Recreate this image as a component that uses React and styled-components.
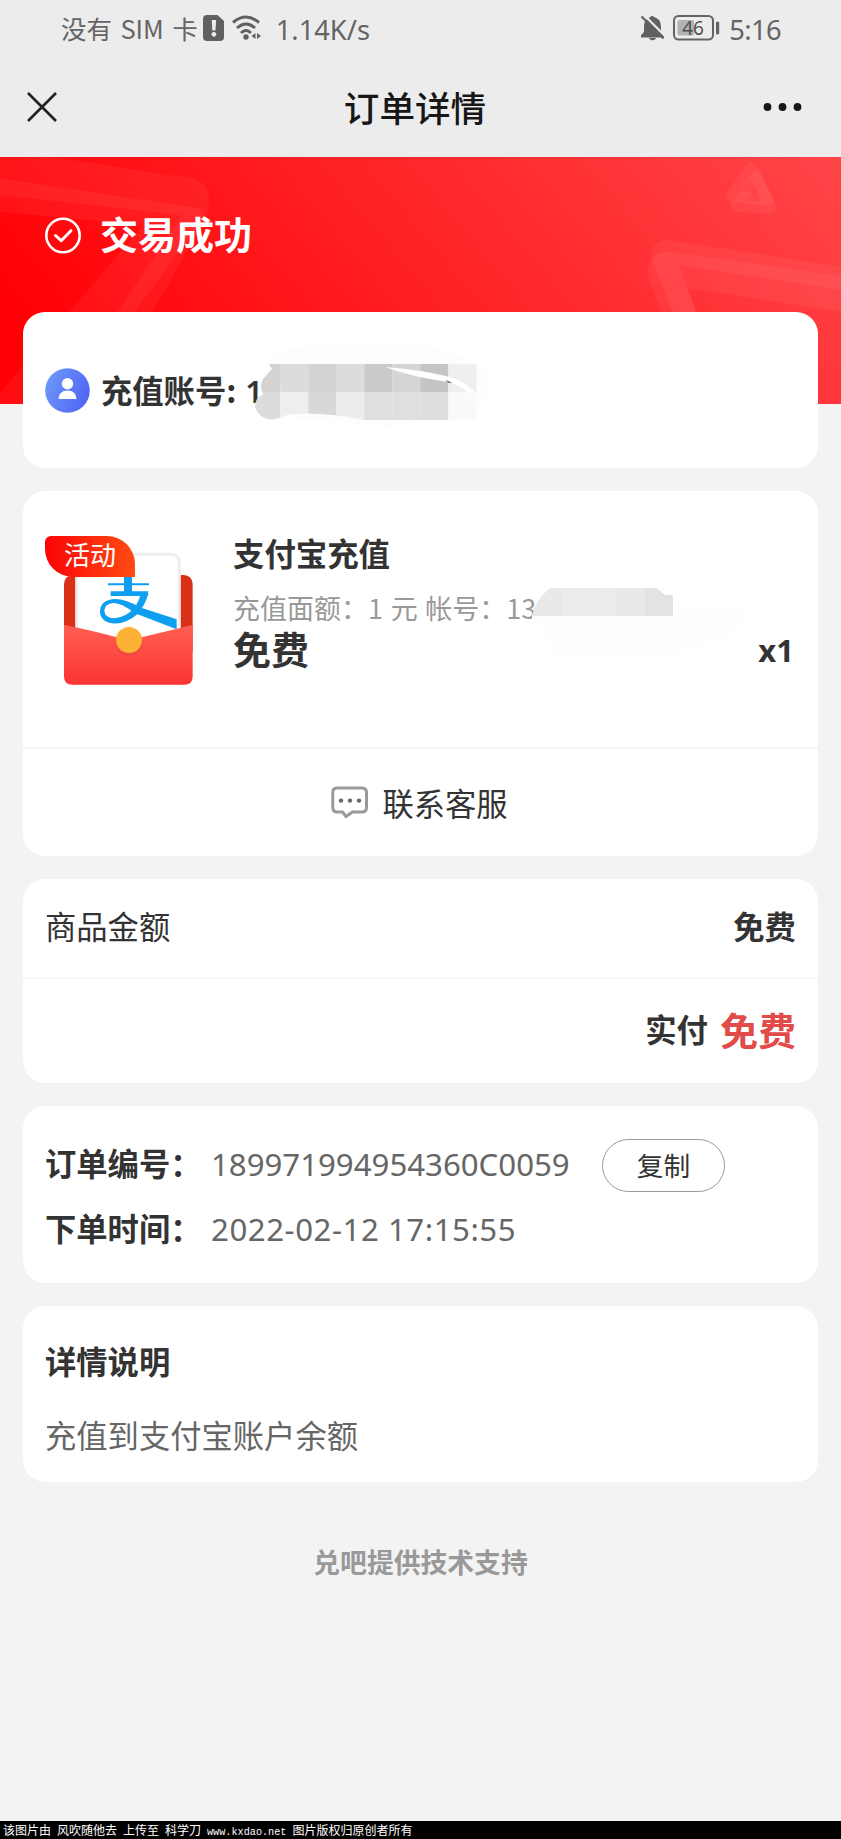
import React from "react";
import styled, { createGlobalStyle } from "styled-components";

const Global = createGlobalStyle`
  * { box-sizing: border-box; }
  html, body { margin: 0; padding: 0; }
  body {
    background: #f3f3f3;
    color: #333;
    font-family: "Noto Sans CJK SC", "Noto Sans", sans-serif;
    font-size: 31.3px;
    line-height: 40px;
    white-space: nowrap;
  }
`;

const Page = styled.div`
  width: 841px;
  height: 1839px;
  display: flex;
  flex-direction: column;
  overflow: hidden;
`;

const StatusBar = styled.div`
  height: 56px;
  padding: 0 60px 0 61px;
  background: #ececec;
  display: flex;
  align-items: center;
  color: #646464;
  font-size: 25.5px;
`;

const StatusText = styled.span`
  font-size: 25.5px;
  word-spacing: 2.7px;
  line-height: 54px;
  height: 54px;
`;

const StatusFigure = styled.span`
  font-family: "Noto Sans", sans-serif;
  font-size: 27.3px;
  line-height: 54px;
  height: 51px;
  margin-left: ${(p) => p.$left}px;
  letter-spacing: ${(p) => p.$track || 0}px;
`;

const StatusIcon = styled.svg`
  display: block;
  flex: none;
  overflow: visible;
  margin-left: ${(p) => p.$left || 0}px;
`;

const Spacer = styled.div`
  flex: 1;
`;

const NavBar = styled.div`
  height: 101px;
  background: #ececec;
  display: grid;
  grid-template-columns: 100px 1fr 100px;
  align-items: center;
  padding: 0 36px 0 25px;
`;

const NavTitle = styled.h1`
  margin: 0;
  font-size: 35.6px;
  font-weight: 500;
  line-height: 50px;
  text-align: center;
  color: #171717;
`;

const NavIcon = styled.svg`
  display: block;
  justify-self: ${(p) => p.$side};
`;

const Banner = styled.section`
  position: relative;
  height: 247px;
  flex: none;
  background: linear-gradient(50deg, #ff0004 8%, #ff2226 52%, #ff4548 100%);
`;

const BannerArt = styled.svg`
  position: absolute;
  inset: 0;
`;

const BannerStatus = styled.div`
  position: relative;
  display: flex;
  align-items: center;
  gap: 18px;
  height: 155px;
  padding-left: 44px;
  color: #fff;
  font-size: 38px;
  font-weight: 700;
`;

const BannerText = styled.span`
  line-height: 56px;
  margin-top: -3px;
`;

const Cards = styled.main`
  position: relative;
  margin: -92px 23px 0;
  display: flex;
  flex-direction: column;
  gap: 23px;
`;

const Card = styled.section`
  background: #fff;
  border-radius: 22px;
  height: ${(p) => p.$height}px;
  flex: none;
  position: relative;
`;

const AccountCard = styled(Card)`
  display: flex;
  align-items: center;
  padding: 0 22px;
`;

const AccountText = styled.span`
  margin-left: 11px;
  font-weight: 700;
`;

const AccountDigits = styled.span`
  font-family: "Noto Sans", sans-serif;
  font-size: 31px;
  font-weight: 600;
  margin: 2px 0 0 9px;
`;

const Mask = styled.svg`
  position: absolute;
  left: ${(p) => p.$x}px;
  top: ${(p) => p.$y}px;
`;

const Product = styled.div`
  height: 258px;
  border-bottom: 2px solid #f5f5f5;
  display: flex;
  padding: 44px 24px 0 22px;
`;

const Thumb = styled.div`
  position: relative;
  width: 150px;
  height: 150px;
  margin-right: 38px;
`;

const Tag = styled.span`
  position: absolute;
  left: 0;
  top: 1px;
  width: 90px;
  height: 41px;
  border-radius: 6px 28px 0 28px;
  background: linear-gradient(90deg, #fb0505, #ff4b14);
  color: #fff;
  font-size: 26px;
  line-height: 36px;
  text-align: center;
`;

const ProductInfo = styled.div`
  flex: 1;
  display: flex;
  flex-direction: column;
`;

const ProductName = styled.h2`
  margin: 0;
  font-size: 31.4px;
  font-weight: 700;
  line-height: 36px;
`;

const ProductSpec = styled.p`
  margin: 18px 0 0;
  font-size: 27px;
  line-height: 38px;
  word-spacing: 1.6px;
  color: #999;
`;

const PriceRow = styled.div`
  display: flex;
  justify-content: space-between;
  align-items: center;
  height: 42px;
  font-weight: 700;
`;

const Price = styled.span`
  font-size: ${(p) => (p.$large ? 38 : 31.4)}px;
  font-weight: 700;
  color: ${(p) => (p.$accent ? "#e24b49" : "#333")};
`;

const Quantity = styled.span`
  font-family: "Noto Sans", sans-serif;
  font-size: 31px;
  font-weight: 700;
  margin-top: 3px;
`;

const ContactRow = styled.div`
  height: 107px;
  padding-right: 2px;
  display: flex;
  align-items: center;
  justify-content: center;
  gap: 14px;
`;

const AmountRow = styled.div`
  height: ${(p) => p.$height}px;
  padding: 0 22px 4px;
  display: flex;
  align-items: center;
  justify-content: ${(p) => (p.$end ? "flex-end" : "space-between")};
  gap: 12px;
  border-bottom: ${(p) => (p.$end ? "none" : "2px solid #f7f7f7")};
`;

const OrderCard = styled(Card)`
  padding: 24px 22px 0;
`;

const OrderRow = styled.div`
  display: flex;
  align-items: center;
  height: 65px;
`;

const Label = styled.span`
  width: 166px;
  font-weight: 700;
`;

const Value = styled.span`
  font-family: "Noto Sans", sans-serif;
  font-size: 31.2px;
  margin-top: 2px;
  color: #666;
  letter-spacing: ${(p) => p.$track}px;
`;

const CopyButton = styled.button`
  margin: 5px 0 0 auto;
  width: 123px;
  height: 53px;
  border: 1px solid #999;
  border-radius: 27px;
  background: #fff;
  color: #333;
  font: inherit;
  font-size: 26.7px;
  line-height: 46px;
  padding: 0;
`;

const OrderLine = styled(OrderRow)`
  width: 680px;
`;

const DetailCard = styled(Card)`
  padding: 35px 22px 0;
`;

const DetailTitle = styled.h3`
  margin: 0;
  font-size: 31.3px;
  font-weight: 700;
  line-height: 40px;
`;

const DetailText = styled.p`
  margin: 34px 0 0;
  color: #666;
`;

const Support = styled.footer`
  margin-top: 60px;
  text-align: center;
  color: #999;
  font-size: 26.8px;
  font-weight: 700;
  flex: 1;
`;

const Credit = styled.div`
  height: 18px;
  background: #000;
  color: #fff;
  font-size: 12px;
  line-height: 17px;
  word-spacing: 3.3px;
  padding-left: 3px;
`;

const CreditUrl = styled.span`
  font-family: "Liberation Mono", monospace;
  font-size: 10.2px;
`;

function SimIcon() {
  return (
    <StatusIcon $left={5} width="21" height="26" viewBox="0 0 21 26">
      <path d="M4 0H14.5L21 6V22a4 4 0 0 1-4 4H4a4 4 0 0 1-4-4V4a4 4 0 0 1 4-4Z" fill="#606060" />
      <path d="M8.7 5h4.4l-.6 10.5H9.3Z" fill="#ececec" />
      <circle cx="10.9" cy="19.3" r="2.4" fill="#ececec" />
    </StatusIcon>
  );
}

function WifiIcon() {
  return (
    <StatusIcon $left={8} width="30" height="26" viewBox="0 0 30 26">
      <g fill="none" stroke="#606060" strokeWidth="3">
        <path d="M1 7.5Q14 -3.500 27 7.500" />
        <path d="M5 13Q14 5 23 13" />
        <path d="M9 18Q14 13 19 18" />
      </g>
      <circle cx="14" cy="22" r="2.700" fill="#606060" />
      <path d="M23.500 18v6l-4-3ZM25 18v6l4-3Z" fill="#606060" />
    </StatusIcon>
  );
}

function BellOffIcon() {
  return (
    <StatusIcon width="24" height="26" viewBox="0 0 24 26">
      <path d="M9 2.200Q11 0 13.500 2.200Q20 4 20 12v5l3 4v1.500H0V20l3-3v-6Q3 4.500 9 2.200Z" fill="#606060" />
      <path d="M8.500 23.500h6q-3 3-6 0" fill="#606060" stroke="#606060" />
      <path d="M2.600 -.5L25 22" stroke="#ececec" strokeWidth="2.200" />
      <path d="M.5 1.500L22.500 23.500" stroke="#606060" strokeWidth="2.200" />
    </StatusIcon>
  );
}

function BatteryIcon() {
  return (
    <StatusIcon $left={8} width="48" height="26" viewBox="0 0 48 26">
      <rect x="1" y="1" width="39" height="23.500" rx="4.500" fill="none" stroke="#646464" strokeWidth="2" />
      <rect x="4.500" y="5" width="16.500" height="15.500" rx="2" fill="#b2b2b2" />
      <rect x="43" y="6.500" width="3.200" height="13" rx="1.500" fill="#646464" />
      <text x="20" y="19.500" textAnchor="middle" fontFamily="Noto Sans, sans-serif" fontSize="19" fill="#505050">46</text>
    </StatusIcon>
  );
}

function BannerShapes() {
  return (
    <BannerArt width="841" height="247" viewBox="0 0 841 247">
      <g transform="translate(0 -7) scale(.33333)" fill="#fff">
        <path fillOpacity=".05" d="M0 -3L570 84Q636 98 626 170Q622 200 604 228L455 490H350L545 196L0 135Z" />
        <path fillOpacity=".05" d="M0 85L580 172Q626 180 605 215L400 490L250 762H-30L0 729L430 226L0 185Z" />
      </g>
      <g transform="translate(421 -7) scale(.33333)" fill="#fff">
        <path fillOpacity=".05" d="M1260 350L745 270Q685 272 693 330L755 490H827L775 345L1260 420Z" />
        <path fillOpacity=".05" d="M1260 378L745 305Q672 308 682 380L722 490H827L800 415L1260 485Z" />
      </g>
      <g transform="translate(421 -7) scale(.33333)" fill="none" stroke="#fff" strokeWidth="34" strokeLinejoin="round" strokeOpacity=".05">
        <path d="M990 53L933 138L1042 150Z" />
        <path d="M1005 80L946 168L1048 175Z" />
      </g>
    </BannerArt>
  );
}

function CheckIcon() {
  return (
    <svg width="38" height="38" viewBox="0 0 38 38" fill="none" stroke="#fff">
      <circle cx="19" cy="19.500" r="16.700" strokeWidth="2.600" />
      <path d="M11.500 19.500l5.700 5.200 9.800-10" strokeWidth="3" strokeLinecap="round" strokeLinejoin="round" />
    </svg>
  );
}

function UserIcon() {
  return (
    <svg width="45" height="45" viewBox="0 0 45 45">
      <defs>
        <linearGradient id="userFill" x1="0" y1="0.300" x2="1" y2="0.700">
          <stop offset="0" stopColor="#6c97f8" />
          <stop offset="1" stopColor="#5064f5" />
        </linearGradient>
      </defs>
      <circle cx="22.500" cy="22.500" r="22.300" fill="url(#userFill)" />
      <circle cx="22.500" cy="15.800" r="5.700" fill="#fff" />
      <path d="M13.500 31Q14 22.500 22.500 22.500T31.500 31Z" fill="#fff" />
    </svg>
  );
}

const tops = ["#d3d3d3", "#dcdcdc", "#d3d3d3", "#dcdcdc", "#cacaca", "#d5d5d5", "#c5c5c5", "#efefef"];
const bottoms = ["#dcdcdc", "#eeeeee", "#d8d8d8", "#ededed", "#dfdfdf", "#dfdfdf", "#dedede", "#fafafa"];

function AccountMask() {
  return (
    <Mask $x={229} $y={30} width="260" height="95" viewBox="0 0 260 95">
      <defs>
        <clipPath id="brush">
          <path d="M17 22H225V78H112Q70 70 46 72Q34 72 27 76Q16 80 8 73Q0 65 5 57L11 52Q7 45 11 37L20 27Z" />
        </clipPath>
      </defs>
      <path d="M14 30Q10 5 70 3H170Q245 20 237 55L215 70L140 85L14 74Z" fill="#fdfdfd" />
      <path d="M9 40L6 56V76H30V40Z" fill="#fff" />
      <g clipPath="url(#brush)">
        {tops.map((c, i) => (
          <rect key={c + i} x={0.3 + i * 28} y="22" width="28.200" height="28" fill={c} />
        ))}
        {bottoms.map((c, i) => (
          <rect key={c + i} x={0.3 + i * 28} y="50" width="28.200" height="28" fill={c} />
        ))}
      </g>
      <path d="M133 25Q165 27 198 35Q213 39 225 52L216 51Q206 42 196 40Q160 35 133 25Z" fill="#fff" />
      <path d="M193 38l7 2.500-3 .5Z" fill="#555" />
    </Mask>
  );
}

function SpecMask() {
  return (
    <Mask $x={508} $y={84} width="230" height="85" viewBox="0 0 230 85">
      <path d="M8 28Q70 0 120 18Q170 38 218 34Q215 60 150 78H20Z" fill="#fefefe" />
      <path d="M1 40H30V45H1Z" fill="#fff" />
      <path d="M1 41Q4 25 19 13H125L134 20H142V41H1Z" fill="#e9e9e9" />
      <path d="M31 13H85V41H31Z" fill="#ececec" />
      <path d="M114 13H125L134 20H142V41H114Z" fill="#e3e3e3" />
      <path d="M1 41H142V50H1Z" fill="#fdfdfd" />
    </Mask>
  );
}

function Envelope() {
  return (
    <svg width="150" height="150" viewBox="75 165 450 450">
      <defs>
        <linearGradient id="flap" x1="0" y1="0" x2="0" y2="1">
          <stop offset="0" stopColor="#ff5f52" />
          <stop offset="1" stopColor="#fb3434" />
        </linearGradient>
      </defs>
      <rect x="132" y="285" width="386" height="250" rx="26" fill="#d83118" />
      <rect x="170" y="223" width="308" height="300" rx="24" fill="#fff" stroke="#eeeeee" strokeWidth="9" />
      <g fill="#0e9ff0">
        <path d="M312 280h24v56h-24z" />
        <path d="M264 310h123v6H264zM272 334h114q-4 8-10 14H272z" />
        <path d="M362 340h24q-12 38-32 61q-40 34-78 29q-36-6-36-37q2-34 46-36q30 0 80 27L470 418v30L345 400q-40-31-64-31q-27 3-28 22q1 24 30 24q36-3 58-30q17-20 21-45Z" />
      </g>
      <path d="M132 435Q220 452 290 472H365L518 435V590q0 24-26 24H158q-26 0-26-24Z" fill="url(#flap)" />
      <circle cx="327" cy="486" r="41" fill="#d8452e" opacity=".35" />
      <circle cx="327" cy="480" r="39" fill="#fdb235" />
    </svg>
  );
}

function ChatIcon() {
  return (
    <svg width="37" height="33" viewBox="0 0 37 33">
      <path
        d="M6 2H31Q35.500 2 35.500 6.500V21.500Q35.500 26 31 26H21.500L15 30.500L11.500 26H6Q1.800 26 1.800 21.500V6.500Q1.800 2 6 2Z"
        fill="none" stroke="#999" strokeWidth="3"
      />
      <g fill="#666">
        <circle cx="10" cy="14.600" r="2.200" />
        <circle cx="19" cy="14.600" r="2.200" />
        <circle cx="28" cy="14.600" r="2.200" />
      </g>
    </svg>
  );
}

export default function App() {
  return (
    <>
      <Global />
      <Page>
        <StatusBar>
          <StatusText>没有 SIM 卡</StatusText>
          <SimIcon />
          <WifiIcon />
          <StatusFigure $left={14}>1.14K/s</StatusFigure>
          <Spacer />
          <BellOffIcon />
          <BatteryIcon />
          <StatusFigure $left={8} $track={-0.6}>5:16</StatusFigure>
        </StatusBar>
        <NavBar>
          <NavIcon $side="start" width="34" height="34" viewBox="0 0 34 34">
            <path d="M3 3L31 31M31 3L3 31" stroke="#222" strokeWidth="2.700" />
          </NavIcon>
          <NavTitle>订单详情</NavTitle>
          <NavIcon $side="end" width="42" height="12" viewBox="0 0 42 12" fill="#171717">
            <circle cx="4.500" cy="6" r="3.900" />
            <circle cx="19.500" cy="6" r="3.900" />
            <circle cx="34.500" cy="6" r="3.900" />
          </NavIcon>
        </NavBar>
        <Banner>
          <BannerShapes />
          <BannerStatus>
            <CheckIcon />
            <BannerText>交易成功</BannerText>
          </BannerStatus>
        </Banner>
        <Cards>
          <AccountCard $height={156}>
            <UserIcon />
            <AccountText>充值账号:</AccountText>
            <AccountDigits>1</AccountDigits>
            <AccountMask />
          </AccountCard>
          <Card $height={365}>
            <Product>
              <Thumb>
                <Envelope />
                <Tag>活动</Tag>
              </Thumb>
              <ProductInfo>
                <ProductName>支付宝充值</ProductName>
                <ProductSpec>充值面额：1 元 帐号：13</ProductSpec>
                <PriceRow>
                  <Price $large>免费</Price>
                  <Quantity>x1</Quantity>
                </PriceRow>
              </ProductInfo>
            </Product>
            <ContactRow>
              <ChatIcon />
              <span>联系客服</span>
            </ContactRow>
            <SpecMask />
          </Card>
          <Card $height={204}>
            <AmountRow $height={100}>
              <span>商品金额</span>
              <Price>免费</Price>
            </AmountRow>
            <AmountRow $height={104} $end>
              <Price>实付</Price>
              <Price $large $accent>免费</Price>
            </AmountRow>
          </Card>
          <OrderCard $height={177}>
            <OrderLine>
              <Label>订单编号：</Label>
              <Value $track={0}>189971994954360C0059</Value>
              <CopyButton>复制</CopyButton>
            </OrderLine>
            <OrderRow>
              <Label>下单时间：</Label>
              <Value $track={0.55}>2022-02-12 17:15:55</Value>
            </OrderRow>
          </OrderCard>
          <DetailCard $height={176}>
            <DetailTitle>详情说明</DetailTitle>
            <DetailText>充值到支付宝账户余额</DetailText>
          </DetailCard>
        </Cards>
        <Support>兑吧提供技术支持</Support>
        <Credit>
          该图片由 风吹随他去 上传至 科学刀 <CreditUrl>www.kxdao.net</CreditUrl> 图片版权归原创者所有
        </Credit>
      </Page>
    </>
  );
}
